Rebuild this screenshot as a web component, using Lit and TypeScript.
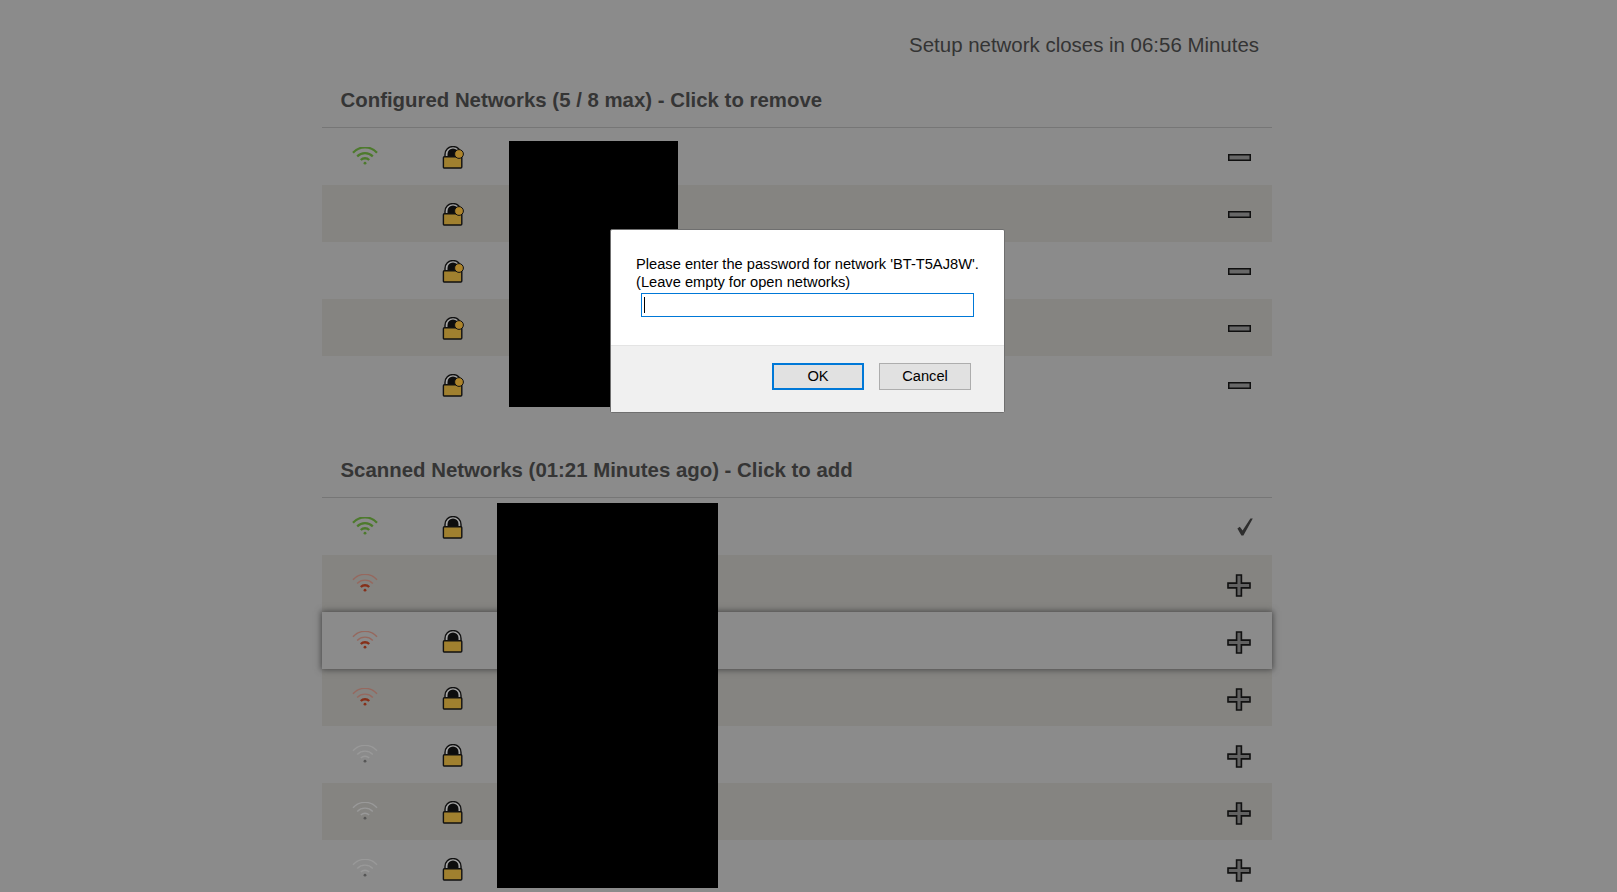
import { LitElement, html, css, svg } from 'lit';
import { customElement } from 'lit/decorators.js';

type Level = 'none' | 'good' | 'mid' | 'low';

const configured = [
  { level: 'good' as Level },
  { level: 'none' as Level },
  { level: 'none' as Level },
  { level: 'none' as Level },
  { level: 'none' as Level },
];

const scanned = [
  { level: 'good' as Level, lock: true, known: true },
  { level: 'mid' as Level, lock: false },
  { level: 'mid' as Level, lock: true, hover: true },
  { level: 'mid' as Level, lock: true },
  { level: 'low' as Level, lock: true },
  { level: 'low' as Level, lock: true },
  { level: 'low' as Level, lock: true },
];

function wifi(level: Level) {
  if (level === 'none') return html``;
  const strong = level === 'good' ? '#4d7a2c' : level === 'mid' ? '#86301a' : '#565656';
  const faint = level === 'mid' ? '#96685e' : '#999999';
  const outer = level === 'good' ? strong : faint;
  const inner = level === 'low' ? faint : strong;
  const w = level === 'good' ? 2.2 : 1.4;
  return html`
    <svg class="wifi" width="26" height="18" viewBox="0 0 26 18">
      <path d="M1 5.8 A16 16 0 0 1 25 5.8" fill="none" stroke=${outer} stroke-width=${w} />
      <path d="M5.2 9.4 A11 11 0 0 1 20.8 9.4" fill="none" stroke=${outer} stroke-width=${w} />
      <path d="M8.8 13 A6 6 0 0 1 17.2 13" fill="none" stroke=${inner} stroke-width=${level === 'low' ? 1.4 : 2.4} />
      <circle cx="13" cy="16.2" r="1.4" fill=${strong} />
    </svg>
  `;
}

function lock(key: boolean) {
  return html`
    <svg class="padlock" width="24" height="23" viewBox="0 0 24 23">
      <path d="M5 11 V8.5 a8 8 0 0 1 16 0 V11" fill="#a5a5a5" stroke="#111" stroke-width="1.4" />
      <path d="M7.5 11 V8 a5.5 5.5 0 0 1 11 0 V11 Z" fill="#0d0d0d" />
      <rect x="3.4" y="10.7" width="18.4" height="11.3" rx="1" fill="#a0802f" stroke="#111" stroke-width="1.4" />
      ${key ? svg`<circle cx="19" cy="8" r="4.4" fill="#ad842b" stroke="#111" stroke-width="1" />` : ''}
    </svg>
  `;
}

const minus = html`
  <svg class="dash" width="23" height="7" viewBox="0 0 23 7">
    <rect x="0.75" y="0.75" width="21.5" height="5.5" fill="#686868" stroke="#0f0f0f" stroke-width="1.5" />
  </svg>
`;

const plus = html`
  <svg width="24" height="23" viewBox="0 0 24 23">
    <path d="M9.6 1 H14.4 V9.1 H23 V13.9 H14.4 V22 H9.6 V13.9 H1 V9.1 H9.6 Z"
      fill="#626262" stroke="#111" stroke-width="1.6" />
  </svg>
`;

const check = html`
  <svg class="tick" width="16" height="18" viewBox="0 0 16 18">
    <path d="M0.4 10.6 L2.8 8.8 L5.6 12.6 L13.4 0.4 L15.8 0.4 L6.4 17.6 L4.4 17.6 Z" fill="#2e2e2e" />
  </svg>
`;

@customElement('app-root')
export class AppRoot extends LitElement {
  static styles = css`
    :host {
      display: block;
      position: relative;
      height: 100vh;
      overflow: hidden;
      background: #8b8b8b;
      font-family: "Liberation Sans", Arial, sans-serif;
    }
    .main {
      position: relative;
      width: 950px;
      margin-left: 322px;
    }
    .status {
      padding: 32px 13px 1px 0;
      font-size: 20.45px;
      line-height: 25px;
      text-align: right;
      color: #343434;
    }
    h2 {
      margin: 0;
      padding: 31px 0 15px 18.5px;
      font-size: 20.4px;
      line-height: 23px;
      font-weight: bold;
      color: #353535;
      border-bottom: 1px solid #767676;
    }
    .scanned {
      margin-top: 15px;
    }
    .row {
      display: grid;
      grid-template-columns: 86px 88px 1fr 66px;
      height: 57px;
      align-items: center;
      justify-items: center;
    }
    .row:nth-child(even) {
      background: #858481;
    }
    .row.hover {
      position: relative;
      background: #8b8b8b;
      box-shadow: 0 0 6px 1px #4a4a4a;
    }
    .wifi {
      display: block;
      margin-top: -2px;
    }
    .lock {
      display: block;
      margin-top: 2px;
    }
    .padlock {
      display: block;
    }
    .action {
      display: flex;
      align-items: center;
      justify-content: center;
      margin-top: 3px;
    }
    .dash {
      margin-top: -2px;
    }
    .tick {
      margin-left: 11px;
      margin-top: -2px;
    }
    .black {
      position: absolute;
      background: #000;
    }
    .black.one {
      left: 187px;
      top: 141px;
      width: 169px;
      height: 266px;
    }
    .black.two {
      left: 175px;
      top: 503px;
      width: 221px;
      height: 385px;
    }
    .dialog {
      position: absolute;
      left: 610px;
      top: 229px;
      width: 395px;
      height: 184px;
      box-sizing: border-box;
      display: flex;
      flex-direction: column;
      background: #fff;
      border: 1px solid #6f6f6f;
      border-radius: 2px;
      font-size: 14.67px;
      color: #000;
    }
    .body {
      flex: 1;
      padding: 26px 25px 0;
      line-height: 17.5px;
    }
    .field {
      position: relative;
      margin: 2px 5px 0;
      width: 333px;
    }
    input {
      display: block;
      box-sizing: border-box;
      width: 333px;
      height: 24px;
      margin: 0;
      padding: 0 2px;
      border: 1px solid #0078d7;
      border-radius: 0;
      outline: none;
      background: #fff;
    }
    .caret {
      position: absolute;
      left: 3px;
      top: 4px;
      width: 1px;
      height: 16px;
      background: #000;
    }
    .footer {
      height: 67px;
      box-sizing: border-box;
      display: flex;
      justify-content: flex-end;
      gap: 15px;
      padding: 17px 33px 0 0;
      background: #f0f0f0;
      border-top: 1px solid #e4e4e4;
    }
    button {
      width: 92px;
      height: 27px;
      box-sizing: border-box;
      padding: 0 0 2px;
      background: #e1e1e1;
      border: 1px solid #adadad;
      font: inherit;
      color: #000;
    }
    button.primary {
      border: 2px solid #0078d7;
    }
  `;

  render() {
    return html`
      <div class="main">
        <div class="status">Setup network closes in 06:56 Minutes</div>
        <section>
          <h2>Configured Networks (5 / 8 max) - Click to remove</h2>
          <div>
            ${configured.map((n) => html`
              <div class="row">
                ${n.level === 'none' ? html`<span></span>` : wifi(n.level)}
                <span class="lock">${lock(true)}</span>
                <span></span>
                <span class="action">${minus}</span>
              </div>
            `)}
          </div>
        </section>
        <section class="scanned">
          <h2>Scanned Networks (01:21 Minutes ago) - Click to add</h2>
          <div>
            ${scanned.map((n) => html`
              <div class="row ${n.hover ? 'hover' : ''}">
                ${wifi(n.level)}
                ${n.lock ? html`<span class="lock">${lock(false)}</span>` : html`<span></span>`}
                <span></span>
                <span class="action">${n.known ? check : plus}</span>
              </div>
            `)}
          </div>
        </section>
        <div class="black one"></div>
        <div class="black two"></div>
      </div>
      <div class="dialog">
        <div class="body">
          Please enter the password for network 'BT-T5AJ8W'.<br />
          (Leave empty for open networks)
          <div class="field">
            <input type="text" />
            <span class="caret"></span>
          </div>
        </div>
        <div class="footer">
          <button class="primary">OK</button>
          <button>Cancel</button>
        </div>
      </div>
    `;
  }
}
